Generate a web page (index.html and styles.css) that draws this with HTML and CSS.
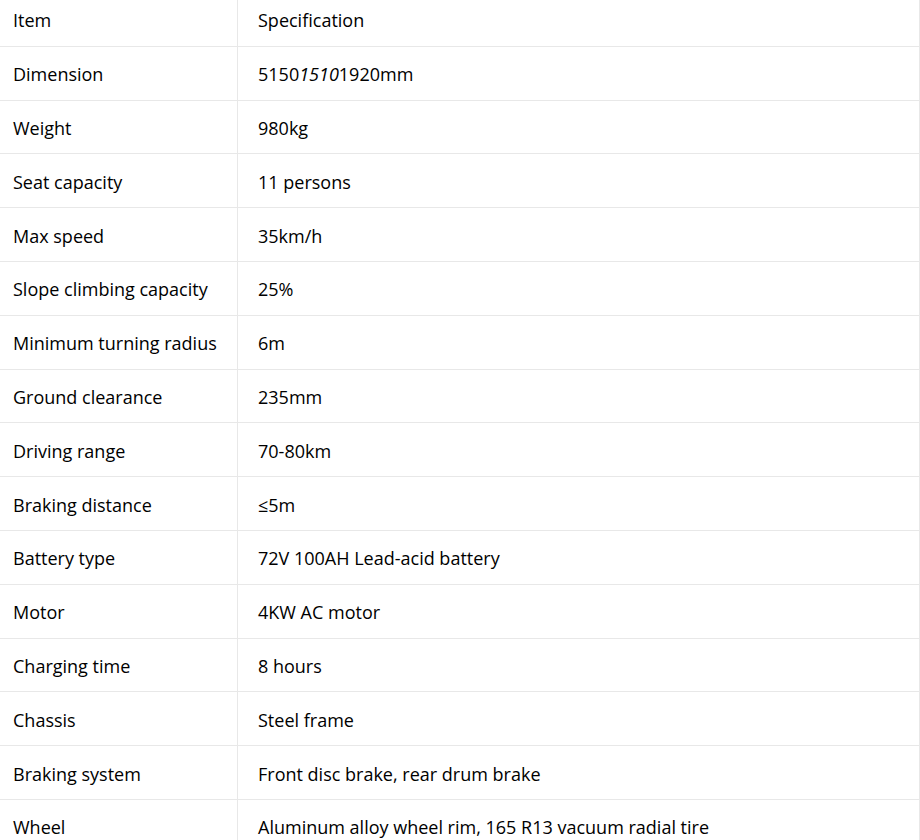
FILE: index.html
```html
<!DOCTYPE html>
<html lang="en">

<head>
    <meta charset="UTF-8">
    <meta name="viewport" content="width=device-width, initial-scale=1.0">
    <title>Specification</title>
    <link rel="stylesheet" href="styles.css">
</head>

<body>
    <!-- spec table -->
    <table class="spec">
        <tr><td>Item</td><td>Specification</td></tr>
        <tr><td>Dimension</td><td>5150<em>1510</em>1920mm</td></tr>
        <tr><td>Weight</td><td>980kg</td></tr>
        <tr><td>Seat capacity</td><td>11 persons</td></tr>
        <tr><td>Max speed</td><td>35km/h</td></tr>
        <tr><td>Slope climbing capacity</td><td>25%</td></tr>
        <tr><td>Minimum turning radius</td><td>6m</td></tr>
        <tr><td>Ground clearance</td><td>235mm</td></tr>
        <tr><td>Driving range</td><td>70-80km</td></tr>
        <tr><td>Braking distance</td><td>≤5m</td></tr>
        <tr><td>Battery type</td><td>72V 100AH Lead-acid battery</td></tr>
        <tr><td>Motor</td><td>4KW AC motor</td></tr>
        <tr><td>Charging time</td><td>8 hours</td></tr>
        <tr><td>Chassis</td><td>Steel frame</td></tr>
        <tr><td>Braking system</td><td>Front disc brake, rear drum brake</td></tr>
        <tr><td>Wheel</td><td>Aluminum alloy wheel rim, 165 R13 vacuum radial tire</td></tr>
    </table>
</body>

</html>
```

FILE: styles.css
```css
body {
    margin: 0;
    background-color: #fff;
    overflow: hidden;
    font-family: "Open Sans", "Noto Sans CJK SC", sans-serif;
    color: #000;
}

.spec {
    border-collapse: collapse;
    width: 928px;
    margin: -8px 0 0 -8px;
    font-size: 18px;
}

.spec tr {
    height: 53.8px;
}

.spec td {
    padding: 2px 20px 0;
    border: 1px solid #e8e8e8;
    vertical-align: middle;
}

.spec td:first-child {
    width: 204px;
}
```
